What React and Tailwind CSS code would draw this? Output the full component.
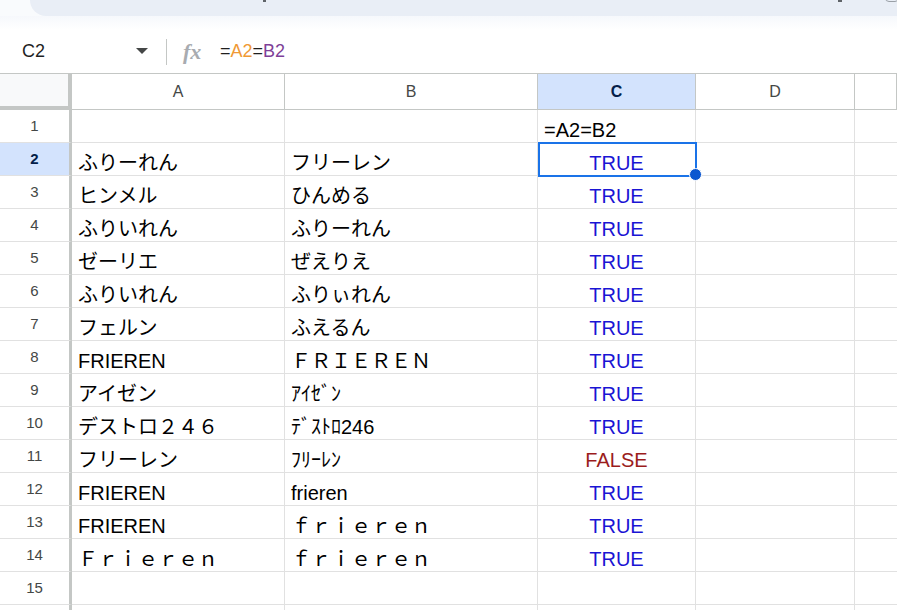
import React from 'react';

const rows = [
  ['', '', '=A2=B2'],
  ['ふりーれん', 'フリーレン', 'TRUE'],
  ['ヒンメル', 'ひんめる', 'TRUE'],
  ['ふりいれん', 'ふりーれん', 'TRUE'],
  ['ゼーリエ', 'ぜえりえ', 'TRUE'],
  ['ふりいれん', 'ふりぃれん', 'TRUE'],
  ['フェルン', 'ふえるん', 'TRUE'],
  ['FRIEREN', 'ＦＲＩＥＲＥＮ', 'TRUE'],
  ['アイゼン', 'ｱｲｾﾞﾝ', 'TRUE'],
  ['デストロ２４６', 'ﾃﾞｽﾄﾛ246', 'TRUE'],
  ['フリーレン', 'ﾌﾘｰﾚﾝ', 'FALSE'],
  ['FRIEREN', 'frieren', 'TRUE'],
  ['FRIEREN', 'ｆｒｉｅｒｅｎ', 'TRUE'],
  ['Ｆｒｉｅｒｅｎ', 'ｆｒｉｅｒｅｎ', 'TRUE'],
  ['', '', ''],
  ['', '', ''],
];

const cols = 'grid grid-cols-[72px_213px_253px_158px_159px_1fr]';

const Cell = ({ children, className = '', color = 'text-black' }) => (
  <div className={`h-[33px] border-r border-b border-[#e1e1e1] flex items-end pb-[1px] leading-[22px] text-[20px] whitespace-nowrap overflow-hidden ${color} ${className}`}>
    {children}
  </div>
);

const App = () => {
  return (
    <div className="w-[897px] h-[610px] overflow-hidden bg-white font-['Liberation_Sans','Noto_Sans_CJK_JP',sans-serif]">
      {/* toolbar remnant */}
      <div className="flex h-[16px] bg-[#f9fbfd]">
        <div className="ml-[30px] flex-1 bg-[#e9eef6] rounded-bl-[16px] relative">
          <div className="absolute left-[233px] top-0 w-[3px] h-[2px] bg-[#5f6368]" />
          <div className="absolute left-[808px] top-0 w-[4px] h-[2px] bg-[#5f6368]" />
          <div className="absolute left-[855px] top-[-6px] w-[14px] h-[8px] rounded-full border border-[#9aa0a6]" />
        </div>
      </div>
      <div className="h-[14px] bg-gradient-to-b from-[#f6f8fc] to-white" />

      {/* formula bar */}
      <div className="h-[44px] flex items-center border-b border-[#c4c7c5]">
        <div className="w-[166px] flex items-center pl-[22px] pr-[18px]">
          <span className="text-[18px] text-[#1f1f1f] flex-1">C2</span>
          <svg width="12" height="7" viewBox="0 0 12 7"><polygon points="0,0 12,0 6,6" fill="#444746" /></svg>
        </div>
        <div className="w-px h-[26px] bg-[#c4c7c5]" />
        <span className="ml-[16px] w-[37px] font-['Liberation_Serif',serif] italic font-bold text-[22px] text-[#a8abb0]">fx</span>
        <span className="text-[18px]">
          <span className="text-[#1f1f1f]">=</span>
          <span className="text-[#f09935]">A2</span>
          <span className="text-[#1f1f1f]">=</span>
          <span className="text-[#7e3f98]">B2</span>
        </span>
      </div>

      {/* column headers */}
      <div className={cols}>
        <div className="h-[36px] bg-[#f8f9fa] border-r-[4px] border-b-[4px] border-[#c4c7c5]" />
        {['A', 'B', 'C', 'D', ''].map((c) => (
          <div
            key={c || 'e'}
            className={`h-[36px] flex items-center justify-center text-[16px] border-r border-b border-[#c4c7c5] ${c === 'C' ? 'bg-[#d3e3fd] text-[#041e49] font-bold' : 'text-[#444746]'}`}
          >
            {c}
          </div>
        ))}
      </div>

      {/* body */}
      <div className={cols}>
        {rows.map((r, i) => {
          const n = i + 1;
          const sel = n === 2;
          return (
            <React.Fragment key={n}>
              <div className={`h-[33px] border-b border-[#e1e1e1] border-r-[3px] border-r-[#c4c7c5] flex items-center justify-center text-[15px] ${sel ? 'bg-[#d3e3fd] text-[#041e49] font-bold' : 'text-[#444746]'}`}>
                {n < 16 ? n : ''}
              </div>
              <Cell className="pl-[6px]">{r[0]}</Cell>
              <Cell className="pl-[6px]">{r[1]}</Cell>
              {n === 1 ? (
                <Cell className="pl-[6px]">{r[2]}</Cell>
              ) : (
                <Cell
                  className="justify-center relative overflow-visible"
                  color={r[2] === 'FALSE' ? 'text-[#9b1c1c]' : 'text-[#1a14d4]'}
                >
                  {r[2]}
                  {sel && (
                    <>
                      <div className="absolute left-0 top-[-1px] w-[159px] h-[35px] border-2 border-[#1a73e8]" />
                      <div className="absolute left-[151px] top-[25px] w-[13px] h-[13px] rounded-full bg-[#0b57d0] border border-white z-10" />
                    </>
                  )}
                </Cell>
              )}
              <Cell />
              <Cell className="border-r-0" />
            </React.Fragment>
          );
        })}
      </div>
    </div>
  );
};

export default App;
